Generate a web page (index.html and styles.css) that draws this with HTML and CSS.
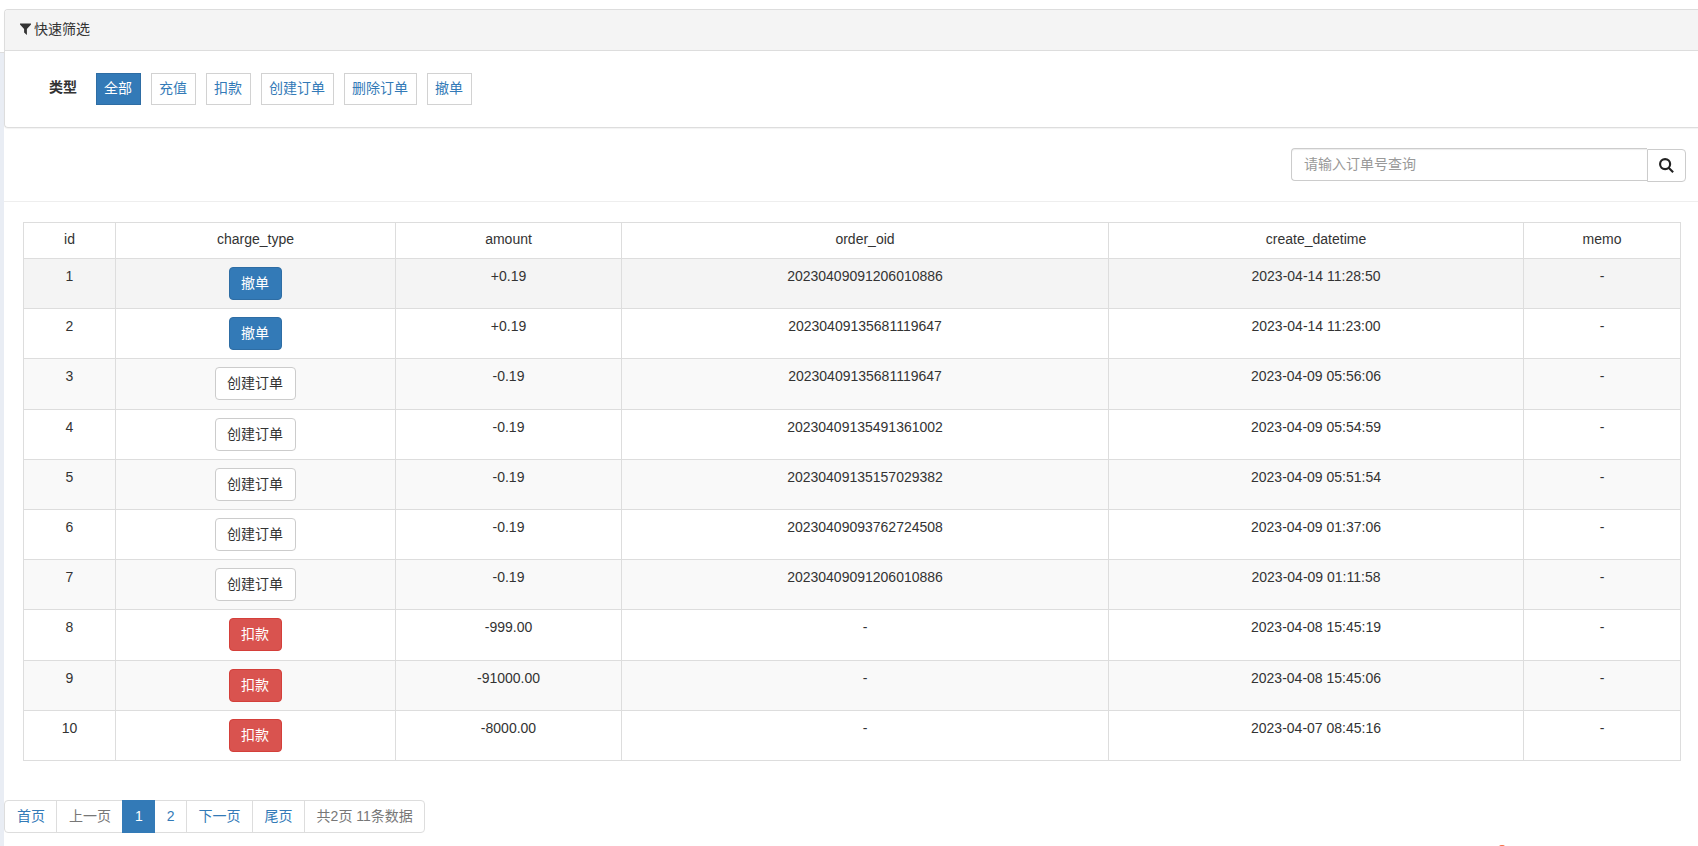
FILE: index.html
```html
<!DOCTYPE html>
<html lang="zh-CN">
<head>
<meta charset="utf-8">
<title>快速筛选</title>
<link rel="stylesheet" href="styles.css">
</head>
<body>
<aside class="rail"><div class="rail-head"></div></aside>
<main class="content">
  <section class="panel">
    <header class="panel-heading">
      <svg class="icon-filter" viewBox="0 0 11 12" aria-hidden="true"><path d="M0 0.5H11V1.6L6.9 6V12L4.1 9.6V6L0 1.6Z"/></svg>
      <span>快速筛选</span>
    </header>
    <div class="panel-body">
      <span class="filter-label" id="type-label">类型</span>
      <nav class="filters" aria-labelledby="type-label">
        <a class="filter active" href="#">全部</a>
        <a class="filter" href="#">充值</a>
        <a class="filter" href="#">扣款</a>
        <a class="filter" href="#">创建订单</a>
        <a class="filter" href="#">删除订单</a>
        <a class="filter" href="#">撤单</a>
      </nav>
    </div>
  </section>

  <form class="search">
    <input class="search-input" type="text" placeholder="请输入订单号查询" aria-label="请输入订单号查询">
    <button class="search-button" type="button" aria-label="查询">
      <svg class="icon-search" viewBox="0 0 14 14" aria-hidden="true"><circle cx="5.7" cy="5.7" r="4.7"/><path d="M9 9L13.2 13.2"/></svg>
    </button>
  </form>

  <hr class="divider">

  <table class="records">
    <colgroup><col class="c-id"><col class="c-type"><col class="c-amount"><col class="c-order"><col class="c-date"><col class="c-memo"></colgroup>
    <thead>
      <tr><th>id</th><th>charge_type</th><th>amount</th><th>order_oid</th><th>create_datetime</th><th>memo</th></tr>
    </thead>
    <tbody>
      <tr class="hovered"><td>1</td><td><button class="btn primary" type="button">撤单</button></td><td>+0.19</td><td>20230409091206010886</td><td>2023-04-14 11:28:50</td><td>-</td></tr>
      <tr><td>2</td><td><button class="btn primary" type="button">撤单</button></td><td>+0.19</td><td>20230409135681119647</td><td>2023-04-14 11:23:00</td><td>-</td></tr>
      <tr><td>3</td><td><button class="btn" type="button">创建订单</button></td><td>-0.19</td><td>20230409135681119647</td><td>2023-04-09 05:56:06</td><td>-</td></tr>
      <tr><td>4</td><td><button class="btn" type="button">创建订单</button></td><td>-0.19</td><td>20230409135491361002</td><td>2023-04-09 05:54:59</td><td>-</td></tr>
      <tr><td>5</td><td><button class="btn" type="button">创建订单</button></td><td>-0.19</td><td>20230409135157029382</td><td>2023-04-09 05:51:54</td><td>-</td></tr>
      <tr><td>6</td><td><button class="btn" type="button">创建订单</button></td><td>-0.19</td><td>20230409093762724508</td><td>2023-04-09 01:37:06</td><td>-</td></tr>
      <tr><td>7</td><td><button class="btn" type="button">创建订单</button></td><td>-0.19</td><td>20230409091206010886</td><td>2023-04-09 01:11:58</td><td>-</td></tr>
      <tr><td>8</td><td><button class="btn danger" type="button">扣款</button></td><td>-999.00</td><td>-</td><td>2023-04-08 15:45:19</td><td>-</td></tr>
      <tr><td>9</td><td><button class="btn danger" type="button">扣款</button></td><td>-91000.00</td><td>-</td><td>2023-04-08 15:45:06</td><td>-</td></tr>
      <tr><td>10</td><td><button class="btn danger" type="button">扣款</button></td><td>-8000.00</td><td>-</td><td>2023-04-07 08:45:16</td><td>-</td></tr>
    </tbody>
  </table>

  <nav aria-label="分页">
    <ul class="pagination">
      <li><a href="#">首页</a></li>
      <li class="muted"><span>上一页</span></li>
      <li class="current"><a href="#" aria-current="page">1</a></li>
      <li><a href="#">2</a></li>
      <li><a href="#">下一页</a></li>
      <li><a href="#">尾页</a></li>
      <li class="muted"><span>共2页 11条数据</span></li>
    </ul>
  </nav>
</main>
<div class="float-dot"></div>
</body>
</html>
```
FILE: styles.css
```css
* { box-sizing: border-box; }

body {
  margin: 0;
  min-height: 100vh;
  display: flex;
  overflow: hidden;
  background: #fff;
  color: #333;
  font: 14px/20px "Liberation Sans", "Noto Sans CJK SC", sans-serif;
}

a { color: #337ab7; text-decoration: none; }

.rail { flex: 0 0 4px; background: #e9edf4; }
.rail-head { height: 53px; background: #fff; border-bottom: 1px solid #ddd; }

.content { flex: 1; min-width: 0; padding-top: 9px; }

.panel {
  border: 1px solid #ddd;
  border-right: 0;
  border-radius: 4px 0 0 4px;
  box-shadow: 0 1px 1px rgba(0, 0, 0, .05);
}
.panel-heading {
  display: flex;
  align-items: center;
  gap: 3px;
  padding: 9px 15px 11px;
  background: #f4f4f4;
  border-bottom: 1px solid #ddd;
  border-radius: 3px 0 0 0;
}
.icon-filter { width: 11px; height: 12px; fill: #333; }
.panel-body {
  display: flex;
  align-items: flex-start;
  gap: 19px;
  padding: 22px 44px;
}
.filter-label { padding-top: 4px; font-weight: 700; }
.filters { display: flex; gap: 10px; }
.filter {
  padding: 4px 8px 6px 7px;
  border: 1px solid #d2d2d2;
}
.filter.active { background: #337ab7; border-color: #2e6da4; color: #fff; }

.search {
  display: flex;
  justify-content: flex-end;
  margin: 20px 12px 19px;
}
.search-input {
  width: 356px;
  height: 33px;
  margin: 0 0 1px;
  padding: 0 12px 2px;
  border: 1px solid #ccc;
  border-right: 0;
  border-radius: 4px 0 0 4px;
  box-shadow: inset 0 1px 1px rgba(0, 0, 0, .075);
  font: inherit;
  color: #555;
}
.search-input::placeholder { color: #999; opacity: 1; }
.search-button {
  display: flex;
  align-items: center;
  justify-content: center;
  width: 39px;
  height: 33px;
  margin: 1px 0 0;
  padding: 0;
  border: 1px solid #ccc;
  border-radius: 0 4px 4px 0;
  background: #fff;
}
.icon-search { width: 15px; height: 15px; fill: none; stroke: #222; stroke-width: 2; }

.divider { margin: 0 0 20px; border: 0; border-top: 1px solid #eee; }

.records {
  width: calc(100% - 36px);
  height: 539px;
  margin: 0 17px 39px 19px;
  table-layout: fixed;
  border-collapse: collapse;
  text-align: center;
}
.c-id { width: 92px; }
.c-type { width: 280px; }
.c-amount { width: 226px; }
.c-order { width: 487px; }
.c-date { width: 415px; }
.c-memo { width: 157px; }
.records th,
.records td {
  padding: 8px;
  border: 1px solid #ddd;
  vertical-align: top;
  font-weight: 400;
  line-height: 18px;
}
.records th { padding: 7px 8px 10px; }
.records tbody tr:nth-child(odd) { background: #f9f9f9; }
.records tbody tr.hovered { background: #f4f4f4; }

.btn {
  display: block;
  margin: 0 auto;
  padding: 6px 12px 6px 11px;
  border: 1px solid #ccc;
  border-radius: 4px;
  background: #fff;
  color: #333;
  font: inherit;
  line-height: 19px;
}
.btn.primary { background: #337ab7; border-color: #2e6da4; color: #fff; }
.btn.danger { background: #d9534f; border-color: #d43f3a; color: #fff; }

.pagination { display: flex; margin: 0; padding: 0; list-style: none; }
.pagination li + li { margin-left: -1px; }
.pagination a,
.pagination span {
  display: block;
  padding: 6px 11px 6px 12px;
  border: 1px solid #ddd;
  line-height: 19px;
}
.pagination li:first-child a { border-radius: 4px 0 0 4px; }
.pagination li:last-child span { border-radius: 0 4px 4px 0; }
.pagination .muted { color: #777; }
.pagination .current { z-index: 1; }
.pagination .current a { background: #337ab7; border-color: #337ab7; color: #fff; }

.float-dot {
  position: fixed;
  right: 191px;
  bottom: -9px;
  width: 10px;
  height: 10px;
  border-radius: 50%;
  background: #f56c42;
}
```
